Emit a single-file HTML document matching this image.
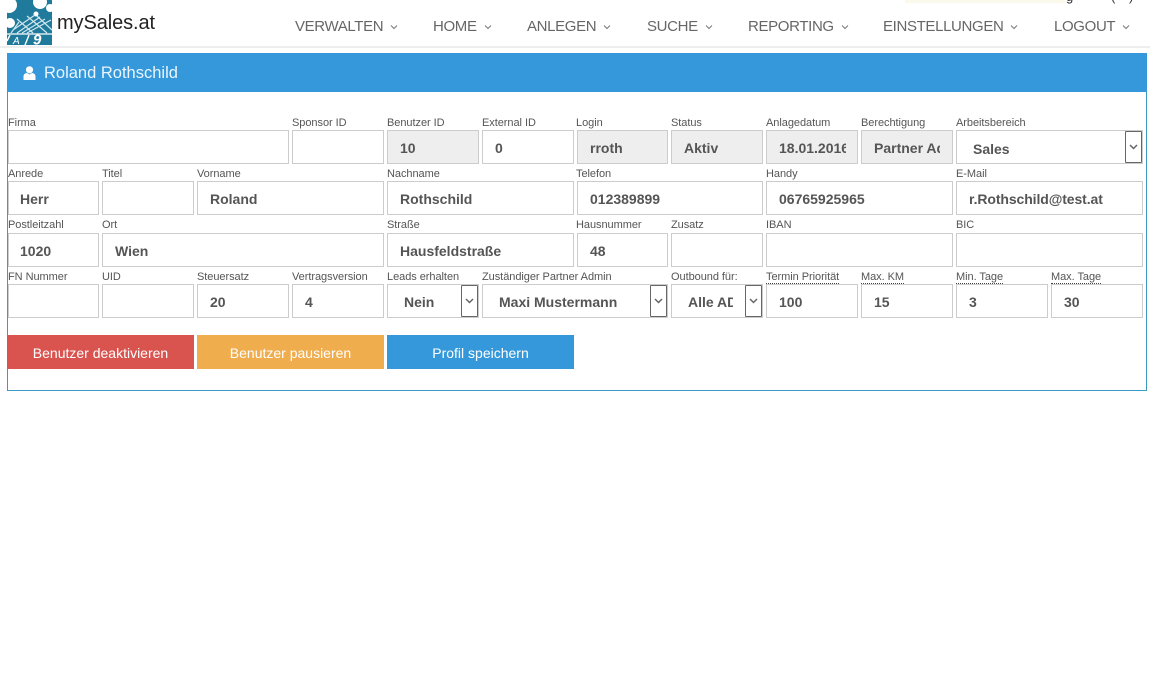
<!DOCTYPE html>
<html lang="de"><head><meta charset="utf-8"><title>mySales.at</title>
<style>
html,body{margin:0;padding:0;background:#fff;width:1150px;height:700px;overflow:hidden;font-family:"Liberation Sans",sans-serif}
.a{position:absolute}
.n{position:absolute;top:18px;font-size:15px;letter-spacing:-.35px;color:#666;line-height:18px;white-space:nowrap}
.n svg{position:absolute;top:6px;right:-15px}
.l{position:absolute;margin-top:1px;font-size:11px;letter-spacing:-.05px;line-height:13px;color:#555;white-space:nowrap}
.d{border-bottom:1px dotted #444;line-height:12px}
.i{position:absolute;box-sizing:border-box;height:34px;border:1px solid #ccc;background:#fff;font-size:14px;font-weight:bold;color:#555;line-height:34px;white-space:nowrap}
.i span{position:absolute;top:0;left:12px;overflow:hidden;height:32px}
.g{background:#eee}
.s{position:absolute;box-sizing:border-box;top:0;right:0;width:17px;height:32px;border:1px solid #666;border-radius:1px;background:#fff}
.s svg{position:absolute;left:3px;top:11px}
.b{position:absolute;top:335px;width:187px;height:34px;line-height:36px;text-align:center;color:#fff;font-size:14px;letter-spacing:0}
</style></head><body>
<svg class="a" style="left:7px;top:0" width="45" height="45" viewBox="0 0 45 45">
<rect width="45" height="45" fill="#1f7a9c"/>
<circle cx="2" cy="5" r="8" fill="#fff"/><circle cx="33" cy="2" r="7" fill="#fff"/><circle cx="43" cy="8" r="4" fill="#fff"/><circle cx="3" cy="23" r="5" fill="#fff"/><circle cx="29" cy="14" r="2.5" fill="#fff"/>
<path d="M6 30L28 15M10 33L33 17M15 33L38 19M20 33L44 20M10 19L26 33M20 16L40 33M30 16L45 30M4 33L12 22" stroke="#cfe6ee" stroke-width="1.2" fill="none"/>
<path d="M0 34H45" stroke="#fff" stroke-width="1.2"/>
<path d="M22 35L18 45M3 35L0 41" stroke="#fff" stroke-width="1.4" fill="none"/>
<text x="6" y="44" font-family="Liberation Sans,sans-serif" font-size="10" font-style="italic" fill="#fff">A</text>
<text x="26" y="44.5" font-family="Liberation Sans,sans-serif" font-size="15" font-weight="bold" font-style="italic" fill="#fff">9</text>
</svg>
<div class="a" style="left:57px;top:11px;font-size:20px;line-height:24px;color:#222;letter-spacing:-.1px">mySales.at</div>
<div class="a" style="left:1111px;top:-10px;font-size:13px;line-height:14px;color:#333">(</div>
<div class="a" style="left:1129px;top:-10px;font-size:13px;line-height:14px;color:#333">)</div>
<div class="a" style="left:1066px;top:-10px;font-size:13px;line-height:14px;color:#333">g</div>
<div class="a" style="left:905px;top:0;width:160px;height:3px;background:#fbf8ec"></div>
<div class="n" style="left:295px">VERWALTEN<svg width="8" height="6" viewBox="0 0 8 6"><path d="M1 1.5L4 4.5L7 1.5" fill="none" stroke="#777" stroke-width="1"/></svg></div>
<div class="n" style="left:433px">HOME<svg width="8" height="6" viewBox="0 0 8 6"><path d="M1 1.5L4 4.5L7 1.5" fill="none" stroke="#777" stroke-width="1"/></svg></div>
<div class="n" style="left:527px">ANLEGEN<svg width="8" height="6" viewBox="0 0 8 6"><path d="M1 1.5L4 4.5L7 1.5" fill="none" stroke="#777" stroke-width="1"/></svg></div>
<div class="n" style="left:647px">SUCHE<svg width="8" height="6" viewBox="0 0 8 6"><path d="M1 1.5L4 4.5L7 1.5" fill="none" stroke="#777" stroke-width="1"/></svg></div>
<div class="n" style="left:748px">REPORTING<svg width="8" height="6" viewBox="0 0 8 6"><path d="M1 1.5L4 4.5L7 1.5" fill="none" stroke="#777" stroke-width="1"/></svg></div>
<div class="n" style="left:883px">EINSTELLUNGEN<svg width="8" height="6" viewBox="0 0 8 6"><path d="M1 1.5L4 4.5L7 1.5" fill="none" stroke="#777" stroke-width="1"/></svg></div>
<div class="n" style="left:1054px">LOGOUT<svg width="8" height="6" viewBox="0 0 8 6"><path d="M1 1.5L4 4.5L7 1.5" fill="none" stroke="#777" stroke-width="1"/></svg></div>
<div class="a" style="left:0;top:46px;width:1150px;height:2px;background:#eee"></div>

<div class="a" style="left:7px;top:53px;width:1138px;height:337px;border:1px solid #3a9bc4;border-top:0"></div>
<div class="a" style="left:7px;top:53px;width:1140px;height:39px;background:#3498db"></div>
<svg class="a" style="left:23px;top:66px" width="13" height="14" viewBox="0 0 13 14"><circle cx="6.5" cy="3.8" r="3.6" fill="#fff"/><path d="M0.5 14V10.5C0.5 8 2.5 7 4 7L6.5 8.5L9 7C10.5 7 12.5 8 12.5 10.5V14Z" fill="#fff"/></svg>
<div class="a" style="left:44px;top:63px;font-size:16.5px;line-height:20px;color:#eaf5fc;white-space:nowrap">Roland Rothschild</div>

<div class="l" style="left:8px;top:116px">Firma</div>
<div class="l" style="left:292px;top:116px">Sponsor ID</div>
<div class="l" style="left:387px;top:116px">Benutzer ID</div>
<div class="l" style="left:482px;top:116px">External ID</div>
<div class="l" style="left:576px;top:116px">Login</div>
<div class="l" style="left:671px;top:116px">Status</div>
<div class="l" style="left:766px;top:116px">Anlagedatum</div>
<div class="l" style="left:861px;top:116px">Berechtigung</div>
<div class="l" style="left:956px;top:116px">Arbeitsbereich</div>
<div class="i" style="left:8px;top:130px;width:281px"></div>
<div class="i" style="left:292px;top:130px;width:92px"></div>
<div class="i g" style="left:387px;top:130px;width:92px"><span>10</span></div>
<div class="i" style="left:482px;top:130px;width:92px"><span>0</span></div>
<div class="i g" style="left:577px;top:130px;width:91px"><span>rroth</span></div>
<div class="i g" style="left:671px;top:130px;width:92px"><span>Aktiv</span></div>
<div class="i g" style="left:766px;top:130px;width:92px"><span style="width:67px">18.01.2016</span></div>
<div class="i g" style="left:861px;top:130px;width:92px"><span style="width:66px">Partner Admin</span></div>
<div class="i" style="left:956px;top:130px;width:187px"><span style="left:16px;top:1px">Sales</span><div class="s"><svg width="9" height="8" viewBox="0 0 9 8"><path d="M1 2L4.5 5.5L8 2" fill="none" stroke="#666" stroke-width="1.5"/></svg></div></div>

<div class="l" style="left:8px;top:167px">Anrede</div>
<div class="l" style="left:102px;top:167px">Titel</div>
<div class="l" style="left:197px;top:167px">Vorname</div>
<div class="l" style="left:387px;top:167px">Nachname</div>
<div class="l" style="left:576px;top:167px">Telefon</div>
<div class="l" style="left:766px;top:167px">Handy</div>
<div class="l" style="left:956px;top:167px">E-Mail</div>
<div class="i" style="left:8px;top:181px;width:91px"><span style="left:11px">Herr</span></div>
<div class="i" style="left:102px;top:181px;width:92px"></div>
<div class="i" style="left:197px;top:181px;width:187px"><span>Roland</span></div>
<div class="i" style="left:387px;top:181px;width:187px"><span>Rothschild</span></div>
<div class="i" style="left:577px;top:181px;width:186px"><span>012389899</span></div>
<div class="i" style="left:766px;top:181px;width:187px"><span>06765925965</span></div>
<div class="i" style="left:956px;top:181px;width:187px"><span style="letter-spacing:-.1px">r.Rothschild@test.at</span></div>

<div class="l" style="left:8px;top:218px">Postleitzahl</div>
<div class="l" style="left:102px;top:218px">Ort</div>
<div class="l" style="left:387px;top:218px">Straße</div>
<div class="l" style="left:576px;top:218px">Hausnummer</div>
<div class="l" style="left:671px;top:218px">Zusatz</div>
<div class="l" style="left:766px;top:218px">IBAN</div>
<div class="l" style="left:956px;top:218px">BIC</div>
<div class="i" style="left:8px;top:233px;width:91px"><span style="left:11px">1020</span></div>
<div class="i" style="left:102px;top:233px;width:282px"><span>Wien</span></div>
<div class="i" style="left:387px;top:233px;width:187px"><span>Hausfeldstraße</span></div>
<div class="i" style="left:577px;top:233px;width:91px"><span>48</span></div>
<div class="i" style="left:671px;top:233px;width:92px"></div>
<div class="i" style="left:766px;top:233px;width:187px"></div>
<div class="i" style="left:956px;top:233px;width:187px"></div>

<div class="l" style="left:8px;top:270px">FN Nummer</div>
<div class="l" style="left:102px;top:270px">UID</div>
<div class="l" style="left:197px;top:270px">Steuersatz</div>
<div class="l" style="left:292px;top:270px">Vertragsversion</div>
<div class="l" style="left:387px;top:270px">Leads erhalten</div>
<div class="l" style="left:482px;top:270px">Zuständiger Partner Admin</div>
<div class="l" style="left:671px;top:270px">Outbound für:</div>
<div class="l d" style="left:766px;top:270px">Termin Priorität</div>
<div class="l d" style="left:861px;top:270px">Max. KM</div>
<div class="l d" style="left:956px;top:270px">Min. Tage</div>
<div class="l d" style="left:1051px;top:270px">Max. Tage</div>
<div class="i" style="left:8px;top:284px;width:91px"></div>
<div class="i" style="left:102px;top:284px;width:92px"></div>
<div class="i" style="left:197px;top:284px;width:92px"><span>20</span></div>
<div class="i" style="left:292px;top:284px;width:92px"><span>4</span></div>
<div class="i" style="left:387px;top:284px;width:92px"><span style="left:16px">Nein</span><div class="s"><svg width="9" height="8" viewBox="0 0 9 8"><path d="M1 2L4.5 5.5L8 2" fill="none" stroke="#666" stroke-width="1.5"/></svg></div></div>
<div class="i" style="left:482px;top:284px;width:186px"><span style="left:16px">Maxi Mustermann</span><div class="s"><svg width="9" height="8" viewBox="0 0 9 8"><path d="M1 2L4.5 5.5L8 2" fill="none" stroke="#666" stroke-width="1.5"/></svg></div></div>
<div class="i" style="left:671px;top:284px;width:92px"><span style="left:16px;width:45px">Alle ADM</span><div class="s"><svg width="9" height="8" viewBox="0 0 9 8"><path d="M1 2L4.5 5.5L8 2" fill="none" stroke="#666" stroke-width="1.5"/></svg></div></div>
<div class="i" style="left:766px;top:284px;width:92px"><span>100</span></div>
<div class="i" style="left:861px;top:284px;width:92px"><span>15</span></div>
<div class="i" style="left:956px;top:284px;width:92px"><span>3</span></div>
<div class="i" style="left:1051px;top:284px;width:92px"><span>30</span></div>

<div class="b" style="left:7px;background:#d9534f">Benutzer deaktivieren</div>
<div class="b" style="left:197px;background:#f0ad4e">Benutzer pausieren</div>
<div class="b" style="left:387px;background:#3498db">Profil speichern</div>
</body></html>
